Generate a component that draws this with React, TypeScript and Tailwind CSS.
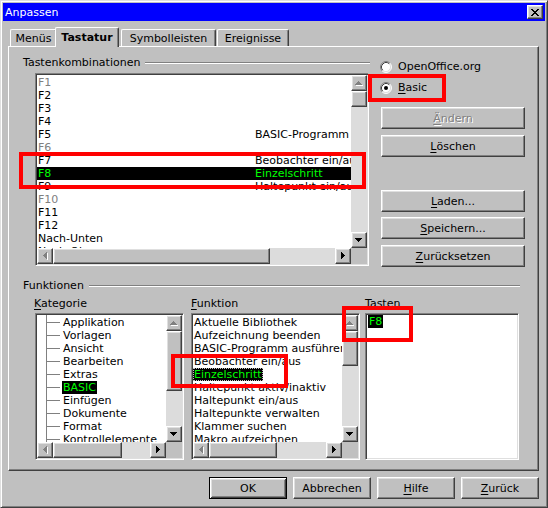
import React from 'react';

type Dir = 'up' | 'down' | 'left' | 'right';

// classic 3D edges
const raised =
  'border border-t-white border-l-white border-r-[#404040] border-b-[#404040] bg-[#c0c0c0] shadow-[inset_-1px_-1px_#808080,inset_1px_1px_#dfdfdf]';
const sunken =
  'border border-t-[#808080] border-l-[#808080] border-r-white border-b-white shadow-[inset_1px_1px_#404040,inset_-1px_-1px_#dfdfdf]';

function Arrow({ dir, disabled }: { dir: Dir; disabled?: boolean }) {
  const rows = [1, 3, 5, 7];
  const rects = rows.map((w, i) => {
    const off = (7 - w) / 2;
    if (dir === 'up') return { x: off, y: i, w, h: 1 };
    if (dir === 'down') return { x: off, y: 3 - i, w, h: 1 };
    if (dir === 'left') return { x: i, y: off, w: 1, h: w };
    return { x: 3 - i, y: off, w: 1, h: w };
  });
  const vertical = dir === 'up' || dir === 'down';
  const w = vertical ? 8 : 5;
  const h = vertical ? 5 : 8;
  return (
    <svg width={w} height={h} viewBox={`0 0 ${w} ${h}`} shapeRendering="crispEdges">
      {disabled &&
        rects.map((r, i) => (
          <rect key={'s' + i} x={r.x + 1} y={r.y + 1} width={r.w} height={r.h} fill="#fff" />
        ))}
      {rects.map((r, i) => (
        <rect key={i} x={r.x} y={r.y} width={r.w} height={r.h} fill={disabled ? '#808080' : '#000'} />
      ))}
    </svg>
  );
}

function ScrollBtn({ dir, disabled }: { dir: Dir; disabled?: boolean }) {
  return (
    <div className={`${raised} flex h-[16px] w-[16px] shrink-0 items-center justify-center`}>
      <Arrow dir={dir} disabled={disabled} />
    </div>
  );
}

function VScroll({ thumb }: { thumb: string }) {
  return (
    <div className="flex w-[16px] shrink-0 flex-col bg-[#dcdcdc]">
      <ScrollBtn dir="up" disabled />
      <div className={`${raised} shrink-0 ${thumb}`} />
      <div className="flex-1" />
      <ScrollBtn dir="down" />
    </div>
  );
}

function HScroll({ thumb }: { thumb: string }) {
  return (
    <div className="flex h-[16px] shrink-0">
      <div className="flex flex-1 bg-[#dcdcdc]">
        <ScrollBtn dir="left" disabled />
        <div className={`${raised} shrink-0 ${thumb}`} />
        <div className="flex-1" />
        <ScrollBtn dir="right" />
      </div>
      <div className="w-[16px] bg-[#c0c0c0]" />
    </div>
  );
}

function ScrollList({
  className,
  vThumb,
  hThumb,
  children,
}: {
  className: string;
  vThumb: string;
  hThumb: string;
  children: React.ReactNode;
}) {
  return (
    <div className={`${sunken} flex flex-col bg-white p-[1px] ${className}`}>
      <div className="flex min-h-0 flex-1">
        <div className="min-w-0 flex-1 overflow-hidden">{children}</div>
        <VScroll thumb={vThumb} />
      </div>
      <HScroll thumb={hThumb} />
    </div>
  );
}

function Heading({ label, className }: { label: string; className: string }) {
  return (
    <div className={`flex h-[13px] items-center ${className}`}>
      <span className="whitespace-nowrap">{label}</span>
      <div className="ml-[5px] h-[2px] flex-1 border-t border-b border-t-[#808080] border-b-white" />
    </div>
  );
}

function Radio({ checked }: { checked?: boolean }) {
  return (
    <svg width="12" height="12" viewBox="0 0 12 12">
      <circle cx="6" cy="6" r="5" fill="#fff" />
      <path d="M2.11 9.89 A5.5 5.5 0 0 1 9.89 2.11" fill="none" stroke="#808080" />
      <path d="M9.89 2.11 A5.5 5.5 0 0 1 2.11 9.89" fill="none" stroke="#fff" />
      <path d="M2.82 9.18 A4.5 4.5 0 0 1 9.18 2.82" fill="none" stroke="#404040" />
      <path d="M9.18 2.82 A4.5 4.5 0 0 1 2.82 9.18" fill="none" stroke="#dfdfdf" />
      {checked && <circle cx="6" cy="6" r="2" fill="#000" />}
    </svg>
  );
}

function Btn({
  children,
  disabled,
  className,
}: {
  children: React.ReactNode;
  disabled?: boolean;
  className: string;
}) {
  return (
    <div
      className={`${raised} flex h-[22px] items-center justify-center ${
        disabled ? 'text-[#808080] [text-shadow:1px_1px_0_#fff]' : ''
      } ${className}`}
    >
      {children}
    </div>
  );
}

function Key({ k, rest }: { k: string; rest: string }) {
  return (
    <>
      <span className="underline underline-offset-[2px]">{k}</span>
      {rest}
    </>
  );
}

function CloseButton() {
  const px = [
    [0, 1, 6, 7],
    [1, 2, 5, 6],
    [2, 3, 4, 5],
    [3, 4],
    [2, 3, 4, 5],
    [1, 2, 5, 6],
    [0, 1, 6, 7],
  ];
  return (
    <div className={`${raised} flex h-[14px] w-[16px] items-center justify-center`}>
      <svg width="8" height="7" viewBox="0 0 8 7" shapeRendering="crispEdges">
        {px.map((row, y) => row.map((x) => <rect key={`${x}-${y}`} x={x} y={y} width="1" height="1" fill="#000" />))}
      </svg>
    </div>
  );
}

type KeyRow = { key: string; fn?: string; off?: boolean; sel?: boolean };

const shortcuts: KeyRow[] = [
  { key: 'F1', off: true },
  { key: 'F2' },
  { key: 'F3' },
  { key: 'F4' },
  { key: 'F5', fn: 'BASIC-Programm ausführen' },
  { key: 'F6', off: true },
  { key: 'F7', fn: 'Beobachter ein/aus' },
  { key: 'F8', fn: 'Einzelschritt', sel: true },
  { key: 'F9', fn: 'Haltepunkt ein/aus' },
  { key: 'F10', off: true },
  { key: 'F11' },
  { key: 'F12' },
  { key: 'Nach-Unten' },
  { key: 'Nach-Oben' },
];

const categories = [
  'Applikation',
  'Vorlagen',
  'Ansicht',
  'Bearbeiten',
  'Extras',
  'BASIC',
  'Einfügen',
  'Dokumente',
  'Format',
  'Kontrollelemente',
];

const functions = [
  'Aktuelle Bibliothek',
  'Aufzeichnung beenden',
  'BASIC-Programm ausführen',
  'Beobachter ein/aus',
  'Einzelschritt',
  'Haltepunkt aktiv/inaktiv',
  'Haltepunkt ein/aus',
  'Haltepunkte verwalten',
  'Klammer suchen',
  'Makro aufzeichnen',
];

function Tab({ label, active, className }: { label: string; active?: boolean; className: string }) {
  return (
    <div
      className={`flex items-center justify-center rounded-t-[2px] border-t border-r border-l border-t-white border-r-[#404040] border-l-white bg-[#c0c0c0] shadow-[inset_-1px_0_#808080] ${
        active ? 'relative z-10 -mb-[1px] h-[20px] font-bold' : 'h-[17px]'
      } ${className}`}
    >
      {label}
    </div>
  );
}

export default function App() {
  return (
    <div className="relative h-[508px] w-[548px] overflow-hidden border border-t-[#dfdfdf] border-r-[#404040] border-b-[#404040] border-l-[#dfdfdf] bg-[#c0c0c0] p-[2px] font-['DejaVu_Sans',sans-serif] text-[11px] leading-[13px] text-black shadow-[inset_1px_1px_#fff,inset_-1px_-1px_#808080]">
      {/* title bar */}
      <div className="flex h-[18px] items-center justify-between bg-[#0000ff] pr-[2px] pl-[2px] text-white">
        <span>Anpassen</span>
        <CloseButton />
      </div>

      {/* tabs */}
      <div className="mt-[6px] flex h-[19px] items-end pl-[7px]">
        <Tab label="Menüs" className="w-[47px]" />
        <Tab label="Tastatur" active className="-ml-[2px] w-[64px]" />
        <Tab label="Symbolleisten" className="ml-[2px] w-[95px]" />
        <Tab label="Ereignisse" className="ml-[1px] w-[72px]" />
      </div>

      {/* tab page */}
      <div className="ml-[5px] flex h-[425px] w-[531px] flex-col border-t border-l border-t-white border-l-white border-r border-b border-r-[#404040] border-b-[#404040] pt-[9px] shadow-[inset_-1px_-1px_#808080]">
        <div className="flex">
          <div className="flex w-[361px] flex-col">
            <Heading label="Tastenkombinationen" className="pl-[14px]" />
            <ScrollList className="mt-[4px] ml-[26px] h-[193px] w-[334px]" vThumb="h-[16px]" hThumb="w-[217px]">
              <div className="pt-[1px]">
                {shortcuts.map((r) => (
                  <div
                    key={r.key}
                    className={`flex h-[13px] whitespace-nowrap ${
                      r.sel ? 'bg-black text-[#00ff00]' : r.off ? 'text-[#808080]' : ''
                    }`}
                  >
                    <span className="w-[218px] shrink-0 pl-[1px]">{r.key}</span>
                    <span>{r.fn}</span>
                  </div>
                ))}
              </div>
            </ScrollList>
          </div>

          <div className="flex flex-col">
            <div className="mt-[4px] flex h-[13px] items-center pl-[10px]">
              <Radio />
              <span className="ml-[6px]">OpenOffice.org</span>
            </div>
            <div className="mt-[8px] flex h-[13px] items-center pl-[10px]">
              <Radio checked />
              <span className="ml-[6px]">
                <Key k="B" rest="asic" />
              </span>
            </div>
            <Btn disabled className="mt-[13px] ml-[11px] w-[144px]">
              <Key k="Ä" rest="ndern" />
            </Btn>
            <Btn className="mt-[6px] ml-[11px] w-[144px]">
              <Key k="L" rest="öschen" />
            </Btn>
            <Btn className="mt-[33px] ml-[11px] w-[144px]">
              <Key k="L" rest="aden..." />
            </Btn>
            <Btn className="mt-[5px] ml-[11px] w-[144px]">
              <Key k="S" rest="peichern..." />
            </Btn>
            <Btn className="mt-[6px] ml-[11px] w-[144px]">
              <Key k="Z" rest="urücksetzen" />
            </Btn>
          </div>
        </div>

        <Heading label="Funktionen" className="mt-[12px] w-[511px] pl-[14px]" />

        <div className="mt-[5px] ml-[26px] flex">
          <div className="flex w-[149px] flex-col">
            <div className="-ml-[1px] h-[13px]">
              <Key k="K" rest="ategorie" />
            </div>
            <ScrollList className="mt-[3px] h-[147px]" vThumb="h-[60px]" hThumb="w-[69px]">
              <div className="ml-[9px] border-l border-[#808080] pt-[1px]">
                {categories.map((c) => (
                  <div key={c} className="flex h-[13px] items-center whitespace-nowrap">
                    <span className="h-px w-[13px] shrink-0 bg-[#808080]" />
                    <span className={`ml-[2px] px-[1px] -mx-[1px] ${c === 'BASIC' ? 'bg-black text-[#00ff00]' : ''}`}>
                      {c}
                    </span>
                  </div>
                ))}
              </div>
            </ScrollList>
          </div>

          <div className="ml-[7px] flex w-[169px] flex-col">
            <div className="h-[13px]">
              <Key k="F" rest="unktion" />
            </div>
            <ScrollList className="mt-[3px] h-[147px]" vThumb="h-[35px]" hThumb="w-[68px]">
              <div className="pt-[1px]">
                {functions.map((f) => (
                  <div key={f} className="h-[13px] whitespace-nowrap">
                    <span
                      className={`px-[1px] ${
                        f === 'Einzelschritt'
                          ? 'bg-black text-[#00ff00] outline outline-1 -outline-offset-1 outline-dotted outline-[#c0c0c0]'
                          : ''
                      }`}
                    >
                      {f}
                    </span>
                  </div>
                ))}
              </div>
            </ScrollList>
          </div>

          <div className="ml-[5px] flex w-[154px] flex-col">
            <div className="h-[13px]">Tasten</div>
            <div className={`${sunken} mt-[3px] h-[147px] bg-white p-[1px]`}>
              <span className="ml-[1px] inline-block h-[13px] bg-black px-[1px] text-[#00ff00]">F8</span>
            </div>
          </div>
        </div>
      </div>

      {/* dialog buttons */}
      <div className="mt-[6px] flex w-[536px] justify-end gap-[6px]">
        <div className="flex h-[22px] w-[78px] items-center justify-center border border-black bg-[#c0c0c0] shadow-[inset_1px_1px_#fff,inset_-1px_-1px_#404040,inset_2px_2px_#dfdfdf,inset_-2px_-2px_#808080]">
          OK
        </div>
        <Btn className="w-[78px]">Abbrechen</Btn>
        <Btn className="w-[78px]">
          <Key k="H" rest="ilfe" />
        </Btn>
        <Btn className="w-[78px]">
          <Key k="Z" rest="urück" />
        </Btn>
      </div>

      {/* red markers */}
      <div className="absolute top-[151px] left-[18px] h-[37px] w-[347px] border-4 border-[#ff0000]" />
      <div className="absolute top-[73px] left-[367px] h-[28px] w-[78px] border-4 border-[#ff0000]" />
      <div className="absolute top-[353px] left-[170px] h-[34px] w-[117px] border-4 border-[#ff0000]" />
      <div className="absolute top-[305px] left-[341px] h-[36px] w-[71px] border-4 border-[#ff0000]" />
    </div>
  );
}
